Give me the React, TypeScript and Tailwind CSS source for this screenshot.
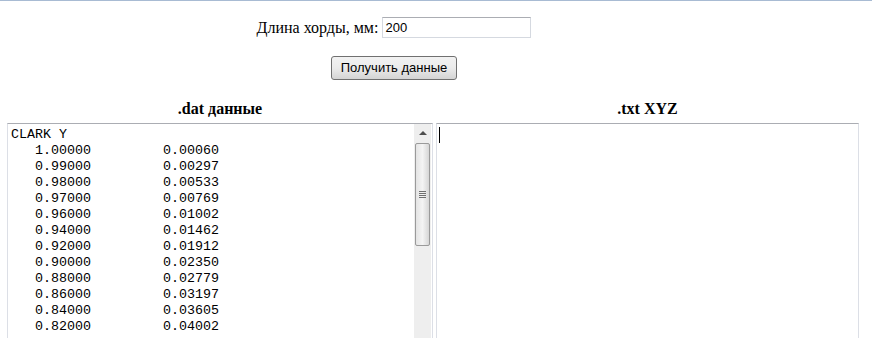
const ROWS: [string, string][] = [
  ["1.00000", "0.00060"],
  ["0.99000", "0.00297"],
  ["0.98000", "0.00533"],
  ["0.97000", "0.00769"],
  ["0.96000", "0.01002"],
  ["0.94000", "0.01462"],
  ["0.92000", "0.01912"],
  ["0.90000", "0.02350"],
  ["0.88000", "0.02779"],
  ["0.86000", "0.03197"],
  ["0.84000", "0.03605"],
  ["0.82000", "0.04002"],
];

const datText =
  "CLARK Y\n" + ROWS.map(([x, y]) => `   ${x}         ${y}`).join("\n");

// fake XP-style vertical scrollbar
const Scrollbar = () => (
  <div className="w-[17px] mr-[1px] bg-[#eeeeee] flex flex-col items-center shrink-0">
    <div className="h-[17px] w-full flex items-center justify-center">
      <div className="w-0 h-0 border-l-[4px] border-r-[4px] border-b-[4px] border-l-transparent border-r-transparent border-b-[#4d4d4d]" />
    </div>
    <div className="mt-[2px] w-[15px] h-[103px] rounded-[2px] border border-[#9a9a9a] bg-gradient-to-r from-[#e4e4e4] via-[#f4f4f4] to-[#d6d6d6] flex flex-col items-center justify-center gap-[1px]">
      <div className="w-[7px] h-[1px] bg-[#6f6f6f]" />
      <div className="w-[7px] h-[1px] bg-[#6f6f6f]" />
      <div className="w-[7px] h-[1px] bg-[#6f6f6f]" />
      <div className="w-[7px] h-[1px] bg-[#6f6f6f]" />
    </div>
  </div>
);

export default function App() {
  return (
    <div className="w-[872px] h-[338px] overflow-hidden bg-white border-t border-[#a8bbd3] text-black">
      {/* форма: центрирована немного левее середины */}
      <div className="w-[788px] flex flex-col items-center">
        <div className="mt-[16px] flex items-center h-[21px]">
          <span
            className="text-[16px] mr-[4px]"
            style={{ fontFamily: '"Liberation Serif", serif' }}
          >
            Длина хорды, мм:
          </span>
          <div
            className="w-[149px] h-[21px] border border-[#d5d9e0] border-t-[#abadb3] text-[13px] pl-[2px] flex items-center"
            style={{ fontFamily: '"Liberation Sans", sans-serif' }}
          >
            200
          </div>
        </div>

        <button
          className="mt-[18px] w-[126px] h-[24px] rounded-[3px] border border-[#707070] bg-gradient-to-b from-[#f2f2f2] via-[#ebebeb] to-[#d4d4d4] text-[13px] text-black"
          style={{ fontFamily: '"Liberation Sans", sans-serif' }}
        >
          Получить данные
        </button>
      </div>

      <div className="mt-[20px] flex pl-[7px] gap-[3px]">
        <div className="w-[426px] flex flex-col">
          <h2
            className="text-center text-[16px] font-bold h-[18px] leading-[18px]"
            style={{ fontFamily: '"Liberation Serif", serif' }}
          >
            .dat данные
          </h2>
          <div className="mt-[5px] h-[240px] flex border border-[#dcdfe6] border-t-[#abadb3] overflow-hidden">
            <pre
              className="flex-1 pl-[3px] pt-[3px] text-[13.33px] leading-[16px] text-black"
              style={{ fontFamily: '"Liberation Mono", monospace' }}
            >
              {datText}
            </pre>
            <Scrollbar />
          </div>
        </div>

        <div className="w-[423px] flex flex-col">
          <h2
            className="text-center text-[16px] font-bold h-[18px] leading-[18px]"
            style={{ fontFamily: '"Liberation Serif", serif' }}
          >
            .txt XYZ
          </h2>
          <div className="mt-[5px] h-[240px] border border-[#dcdfe6] border-t-[#abadb3] pl-[2px] pt-[3px]">
            <div className="w-[1px] h-[16px] bg-black" />
          </div>
        </div>
      </div>
    </div>
  );
}
